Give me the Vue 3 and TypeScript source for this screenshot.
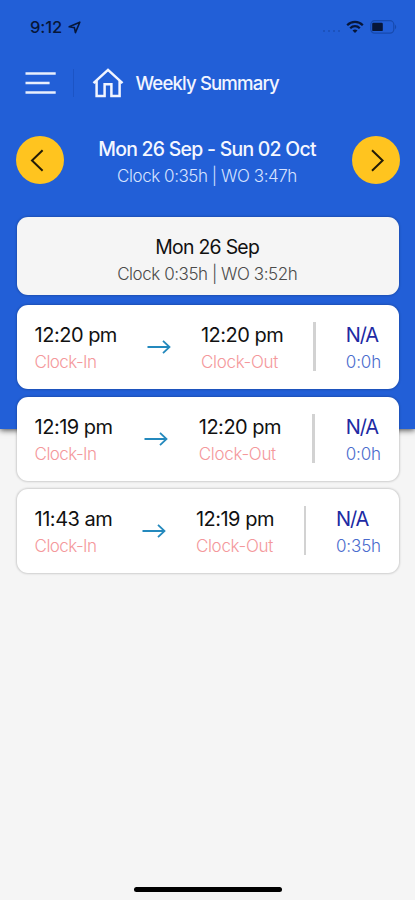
<script setup lang="ts">
interface Entry {
  start: string
  end: string
  order: string
  total: string
}

const entries: Entry[] = [
  { start: '12:20 pm', end: '12:20 pm', order: 'N/A', total: '0:0h' },
  { start: '12:19 pm', end: '12:20 pm', order: 'N/A', total: '0:0h' },
  { start: '11:43 am', end: '12:19 pm', order: 'N/A', total: '0:35h' },
]
</script>

<template>
  <div class="screen">
    <div class="backdrop"></div>
    <div class="content">
      <header class="status">
        <span class="time">9:12</span>
        <svg class="location" width="13" height="13" viewBox="0 0 13 13">
          <path d="M1.2 5.8 L11.8 1.2 L7.4 11.6 L6.4 6.6 Z" fill="none" stroke="currentColor" stroke-width="1.6" stroke-linejoin="round" />
        </svg>
        <span class="dots"><i v-for="n in 4" :key="n"></i></span>
        <svg class="wifi" width="18" height="14" viewBox="0 0 18 14">
          <g fill="none" stroke="currentColor" stroke-width="2.2">
            <path d="M1.2 5.2 C5.5 .7 12.5 .7 16.8 5.2" />
            <path d="M4.2 8.2 C6.9 5.4 11.1 5.4 13.8 8.2" />
          </g>
          <path d="M6.5 10.5 Q9 8.4 11.5 10.5 L9 13 Z" fill="currentColor" />
        </svg>
        <svg class="battery" width="27" height="14" viewBox="0 0 27 14">
          <rect x=".8" y=".7" width="23" height="12.4" rx="3.8" fill="none" stroke="#174aae" stroke-width="1.2" />
          <path d="M25 4.6 Q27.4 6.9 25 9.2 Z" fill="#174aae" />
          <rect x="2.2" y="2.8" width="10.6" height="8.3" rx="1.2" fill="currentColor" />
        </svg>
      </header>

      <nav class="bar">
        <svg class="menu" width="31" height="24" viewBox="0 0 31 24">
          <path d="M.5 2.5H30.7M.5 12H24.6M.5 21.5H30.7" stroke="#e9effd" stroke-width="2.4" />
        </svg>
        <span class="rule"></span>
        <svg class="home" width="32" height="30" viewBox="0 0 32 30">
          <path d="M1.5 15.2 L16 1.9 L30.5 15.2 M4.6 13 V28 H12.6 V16.3 H19.4 V28 H27.6 V13" fill="none" stroke="#f2f5ff" stroke-width="2.5" />
        </svg>
        <h1>Weekly Summary</h1>
      </nav>

      <section class="week">
        <button class="round" aria-label="Previous week">
          <svg width="48" height="48" viewBox="0 0 48 48"><path d="M26.6 14.2 L16 24.5 L26.6 34.7" /></svg>
        </button>
        <div class="range">
          <p class="dates">Mon 26 Sep - Sun 02 Oct</p>
          <p class="sums">Clock 0:35h | WO 3:47h</p>
        </div>
        <button class="round" aria-label="Next week">
          <svg width="48" height="48" viewBox="0 0 48 48"><path d="M20 14.2 L30.6 24.5 L20 34.7" /></svg>
        </button>
      </section>

      <section class="card day">
        <p class="dates">Mon 26 Sep</p>
        <p class="sums">Clock 0:35h | WO 3:52h</p>
      </section>

      <article v-for="(entry, i) in entries" :key="i" class="card entry">
        <div>
          <p class="hour">{{ entry.start }}</p>
          <p class="label in">Clock-In</p>
        </div>
        <svg class="arrow" width="24" height="16" viewBox="0 0 24 16">
          <path d="M.5 8H22.5M16 1.8L22.5 8L16 14.2" fill="none" stroke="#2489bd" stroke-width="1.8" />
        </svg>
        <div>
          <p class="hour">{{ entry.end }}</p>
          <p class="label">Clock-Out</p>
        </div>
        <span class="divider"></span>
        <div>
          <p class="hour order">{{ entry.order }}</p>
          <p class="label total">{{ entry.total }}</p>
        </div>
      </article>
    </div>
    <div class="indicator"></div>
  </div>
</template>

<style>
body {
  background: #f5f5f5;
}
</style>

<style scoped>
.screen {
  display: grid;
  grid-template-rows: 429px 1fr 13px;
  height: 900px;
  overflow: hidden;
  background: #f5f5f5;
  font-family: Inter, 'Liberation Sans', sans-serif;
  color: #111;
}
.backdrop {
  grid-area: 1 / 1;
  background: #225fd7;
  box-shadow: 0 1px 6px rgba(0, 0, 0, 0.75);
}
.content {
  grid-area: 1 / 1 / 3 / 2;
  z-index: 1;
}
p, h1 {
  margin: 0;
  white-space: nowrap;
}
svg {
  display: block;
  flex: none;
}
.status {
  display: flex;
  align-items: center;
  height: 54px;
  padding: 0 18px 0 30px;
  box-sizing: border-box;
  color: #071638;
}
.time {
  width: 33px;
  font-size: 16.5px;
  font-weight: 500;
  letter-spacing: -0.1px;
}
.location {
  margin-left: 5px;
}
.dots {
  display: flex;
  gap: 2.5px;
  margin: 8px 6px 0 auto;
}
.dots i {
  width: 2.5px;
  height: 2.5px;
  border-radius: 50%;
  background: #1b4eb4;
}
.battery {
  margin-left: 6px;
}
.bar {
  display: flex;
  align-items: center;
  height: 58px;
  padding-left: 25px;
}
.rule {
  width: 1px;
  height: 28px;
  margin: 0 18px 0 17px;
  background: #1c54c5;
}
h1 {
  margin-left: 11.5px;
  color: #f2f5ff;
  font-size: 18.6px;
  font-weight: 500;
  letter-spacing: -0.86px;
}
.week {
  display: flex;
  justify-content: space-between;
  height: 81px;
  padding: 24px 15.4px 0 16.4px;
}
.round {
  width: 48px;
  height: 48px;
  padding: 0;
  border: 0;
  border-radius: 50%;
  background: #ffc41f;
}
.round path {
  fill: none;
  stroke: #241c08;
  stroke-width: 2;
}
.range {
  padding-right: 2px;
  text-align: center;
  color: #f5f7ff;
}
.dates {
  font-size: 19.4px;
  line-height: 26px;
  letter-spacing: -0.72px;
}
.range .dates {
  font-weight: 500;
}
.sums {
  font-size: 17px;
  font-weight: 300;
  line-height: 28px;
  letter-spacing: -0.45px;
}
.range .sums {
  color: #d6e2ff;
}
.card {
  height: 84px;
  margin: 0 16px 8px 17px;
  box-sizing: border-box;
  border-radius: 11px;
  background: #fff;
  box-shadow: 0 0 2px 1px rgba(0, 0, 0, 0.16);
}
.day {
  height: 78px;
  margin-bottom: 10px;
  padding: 17px 1.6px 0 0;
  background: #f5f5f5;
  text-align: center;
}
.day .sums {
  color: #4a4a4a;
}
.entry {
  display: flex;
  align-items: flex-start;
  justify-content: space-between;
  padding: 17px 18px 0 17.6px;
}
.hour {
  font-size: 20px;
  line-height: 26px;
  letter-spacing: -0.5px;
}
.label {
  color: #f4989b;
  font-size: 17px;
  font-weight: 300;
  line-height: 28px;
  letter-spacing: -0.3px;
}
.in {
  letter-spacing: -0.55px;
}
.order {
  color: #202aa3;
  letter-spacing: -1.1px;
}
.total {
  color: #4a6bcd;
  letter-spacing: -0.15px;
}
.arrow {
  margin-top: 17px;
}
.divider {
  width: 2.5px;
  height: 49px;
  background: #d2d2d2;
}
.indicator {
  grid-row: 3;
  width: 148px;
  height: 5px;
  margin: -0.5px 0 0 134px;
  border-radius: 3px;
  background: #000;
}
</style>
